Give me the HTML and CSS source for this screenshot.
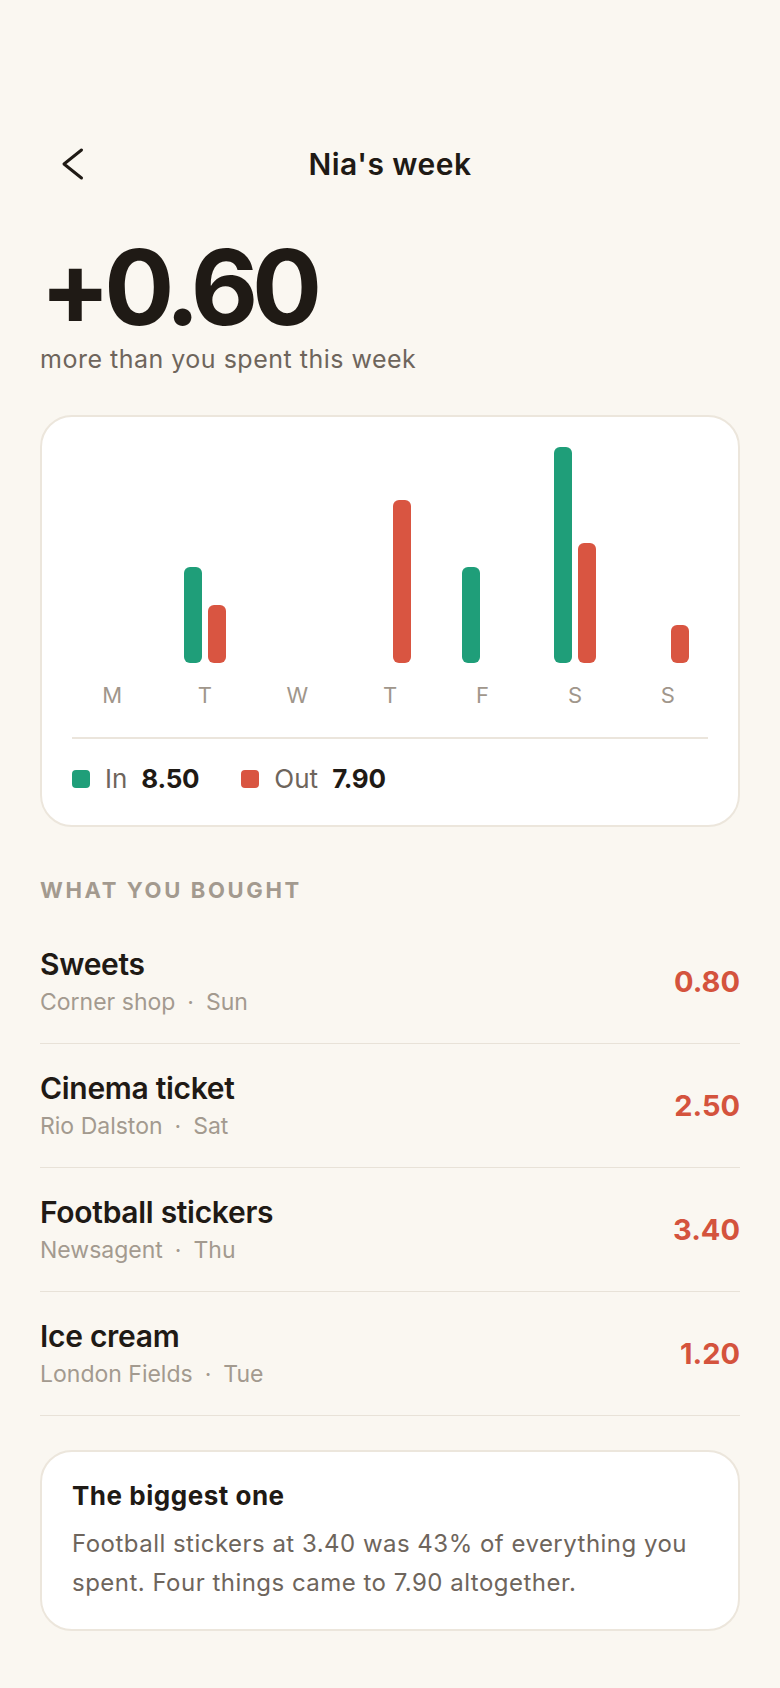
FILE: index.html
```html
<!DOCTYPE html>
<html lang="en">
<head>
<meta charset="utf-8">
<title>Nia's week</title>
<link rel="stylesheet" href="styles.css">
</head>
<body>
<main class="screen">
  <header class="topbar">
    <button class="back" aria-label="Back">
      <svg width="48" height="48" viewBox="0 0 48 48" fill="none"><path d="M32.5 10 L15 24 L32.5 38" stroke="#1f1a15" stroke-width="3" stroke-linecap="round" stroke-linejoin="round"/></svg>
    </button>
    <h1 class="title">Nia's week</h1>
    <span class="spacer"></span>
  </header>

  <section class="hero">
    <div class="amount">+0.60</div>
    <p class="caption">more than you spent this week</p>
  </section>

  <section class="card chart-card">
    <div class="chart">
      <div class="day">
        <div class="bars"><span class="bar in" style="height:0px"></span><span class="bar out" style="height:0px"></span></div>
        <span class="dlabel">M</span>
      </div>
      <div class="day">
        <div class="bars"><span class="bar in" style="height:96px"></span><span class="bar out" style="height:58px"></span></div>
        <span class="dlabel">T</span>
      </div>
      <div class="day">
        <div class="bars"><span class="bar in" style="height:0px"></span><span class="bar out" style="height:0px"></span></div>
        <span class="dlabel">W</span>
      </div>
      <div class="day">
        <div class="bars"><span class="bar in" style="height:0px"></span><span class="bar out" style="height:163px"></span></div>
        <span class="dlabel">T</span>
      </div>
      <div class="day">
        <div class="bars"><span class="bar in" style="height:96px"></span><span class="bar out" style="height:0px"></span></div>
        <span class="dlabel">F</span>
      </div>
      <div class="day">
        <div class="bars"><span class="bar in" style="height:216px"></span><span class="bar out" style="height:120px"></span></div>
        <span class="dlabel">S</span>
      </div>
      <div class="day">
        <div class="bars"><span class="bar in" style="height:0px"></span><span class="bar out" style="height:38px"></span></div>
        <span class="dlabel">S</span>
      </div>
    </div>
    <div class="divider"></div>
    <div class="legend">
      <div class="key"><span class="swatch in"></span><span class="klabel">In</span><strong class="kval">8.50</strong></div>
      <div class="key"><span class="swatch out"></span><span class="klabel">Out</span><strong class="kval">7.90</strong></div>
    </div>
  </section>

  <h2 class="section-label">WHAT YOU BOUGHT</h2>
  <ul class="list">
    <li class="row">
      <div class="info"><span class="name">Sweets</span><span class="meta">Corner shop<span class="dot">·</span>Sun</span></div>
      <span class="price">0.80</span>
    </li>
    <li class="row">
      <div class="info"><span class="name">Cinema ticket</span><span class="meta">Rio Dalston<span class="dot">·</span>Sat</span></div>
      <span class="price">2.50</span>
    </li>
    <li class="row">
      <div class="info"><span class="name">Football stickers</span><span class="meta">Newsagent<span class="dot">·</span>Thu</span></div>
      <span class="price">3.40</span>
    </li>
    <li class="row">
      <div class="info"><span class="name">Ice cream</span><span class="meta">London Fields<span class="dot">·</span>Tue</span></div>
      <span class="price">1.20</span>
    </li>
  </ul>

  <section class="card insight">
    <h3 class="insight-title">The biggest one</h3>
    <p class="insight-body">Football stickers at 3.40 was 43% of everything you spent. Four things came to 7.90 altogether.</p>
  </section>
</main>
</body>
</html>
```

FILE: styles.css
```css
* { box-sizing: border-box; }
html, body { margin: 0; padding: 0; }
body {
  background: #faf7f1;
  font-family: Inter, "Noto Sans", "Liberation Sans", sans-serif;
  color: #1f1a15;
}
.screen {
  padding: 140px 40px 40px;
  display: flex;
  flex-direction: column;
}
.topbar {
  display: grid;
  grid-template-columns: 66px 1fr 66px;
  align-items: center;
  height: 48px;
}
.back {
  width: 48px;
  height: 48px;
  margin-left: 9px;
  padding: 0;
  border: 0;
  background: none;
  display: flex;
  align-items: center;
  justify-content: center;
}
.title {
  margin: 0;
  text-align: center;
  font-size: 30px;
  line-height: 36px;
  font-weight: 600;
  letter-spacing: 0.015em;
}
.hero { margin-top: 51px; }
.amount {
  font-size: 104px;
  line-height: 96px;
  font-weight: 700;
  letter-spacing: -0.06em;
}
.caption {
  margin: 9px 0 0;
  font-size: 25px;
  line-height: 30px;
  letter-spacing: 0.02em;
  color: #6e655c;
}
.card {
  background: #ffffff;
  border: 2px solid #ece6dc;
  border-radius: 32px;
}
.chart-card {
  margin-top: 41px;
  padding: 30px;
}
.chart {
  display: grid;
  grid-template-columns: repeat(7, 1fr);
  margin: 0 -6px;
}
.day {
  display: flex;
  flex-direction: column;
  align-items: center;
  gap: 18px;
}
.bars {
  height: 216px;
  display: flex;
  align-items: flex-end;
  gap: 6px;
}
.bar {
  width: 18px;
  border-radius: 6px;
  display: block;
}
.bar.in { background: #1f9e79; }
.bar.out { background: #d95541; }
.dlabel {
  font-size: 22px;
  line-height: 28px;
  color: #a0968b;
}
.divider {
  height: 2px;
  margin-top: 28px;
  background: #ebe5dc;
}
.legend {
  display: flex;
  gap: 42px;
  padding-top: 24px;
  font-size: 26px;
  line-height: 32px;
}
.key {
  display: flex;
  align-items: center;
}
.swatch {
  width: 18px;
  height: 18px;
  border-radius: 4px;
  margin-right: 15px;
}
.swatch.in { background: #1f9e79; }
.swatch.out { background: #d95541; }
.klabel { color: #6e655c; margin-right: 14px; }
.kval { font-weight: 700; color: #1f1a15; letter-spacing: -0.01em; }
.section-label {
  margin: 49px 0 0;
  font-size: 22px;
  line-height: 28px;
  font-weight: 700;
  letter-spacing: 0.12em;
  color: #a39a8f;
}
.list {
  list-style: none;
  margin: 16px 0 0;
  padding: 0;
}
.row {
  display: flex;
  align-items: center;
  justify-content: space-between;
  padding: 26px 0 25px;
  border-bottom: 1px solid #e8e2d8;
}
.info {
  display: flex;
  flex-direction: column;
  gap: 4px;
}
.name {
  font-size: 30px;
  line-height: 36px;
  font-weight: 600;
  letter-spacing: -0.01em;
}
.meta {
  font-size: 23px;
  line-height: 32px;
  color: #a39a8f;
}
.dot { margin: 0 12px; }
.price {
  font-size: 29px;
  line-height: 36px;
  font-weight: 700;
  color: #d4533d;
}
.insight {
  margin-top: 34px;
  padding: 28px 30px 27px;
}
.insight-title {
  margin: 0;
  font-size: 26px;
  line-height: 32px;
  font-weight: 700;
  letter-spacing: 0.02em;
}
.insight-body {
  margin: 12px 0 0;
  font-size: 24px;
  line-height: 39px;
  letter-spacing: 0.02em;
  color: #6e655c;
}
```
